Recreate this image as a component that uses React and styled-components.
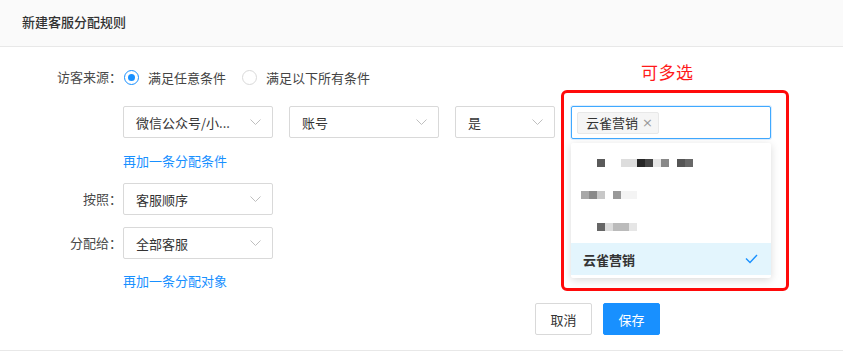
import styled, { createGlobalStyle } from "styled-components"

const GlobalStyle = createGlobalStyle`
  * { box-sizing: border-box; }
  body {
    margin: 0;
    background: #fff;
    font-family: "Noto Sans CJK SC", "Noto Sans", sans-serif;
    font-size: 13px;
    color: #444;
  }
`

// blurred option labels, drawn as mosaic blocks: [gap before, width, colour]
const sourceOptions = [
  { id: 1, blocks: [[26, 8, "#5a5a5a"], [16, 16, "#dddddd"], [0, 8, "#262626"], [0, 8, "#454545"], [0, 8, "#e6e6e6"], [0, 8, "#888888"], [8, 8, "#555555"], [0, 8, "#686868"]] },
  { id: 2, blocks: [[10, 8, "#a8a8a8"], [0, 8, "#8a8a8a"], [0, 8, "#c8c8c8"], [8, 8, "#999999"], [0, 16, "#f4f4f4"]] },
  { id: 3, blocks: [[26, 8, "#666666"], [0, 8, "#dcdcdc"], [0, 16, "#bbbbbb"], [0, 8, "#e6e6e6"]] },
]

function Chevron() {
  return (
    <svg width="11" height="6" viewBox="0 0 11 6">
      <polyline points="0.5,0.5 5.5,5.5 10.5,0.5" fill="none" stroke="#bfbfbf" strokeWidth="1" />
    </svg>
  )
}

function Select({ width, children }) {
  return (
    <SelectBox $width={width}>
      <span>{children}</span>
      <Chevron />
    </SelectBox>
  )
}

export default function App() {
  return (
    <Page>
      <GlobalStyle />
      <Header>新建客服分配规则</Header>

      <Body>
        <Row $top={15}>
          <Label>访客来源：</Label>
          <RadioGroup>
            <RadioItem>
              <Radio $checked />
              满足任意条件
            </RadioItem>
            <RadioItem>
              <Radio />
              满足以下所有条件
            </RadioItem>
          </RadioGroup>
        </Row>

        <Row $top={14}>
          <Label />
          <Conditions>
            <Select width={150}>微信公众号/小...</Select>
            <Select width={150}>账号</Select>
            <Select width={100}>是</Select>
            <MultiWrap>
              <MultiSelect>
                <Tag>
                  云雀营销
                  <TagClose>×</TagClose>
                </Tag>
              </MultiSelect>

              <Dropdown>
                {sourceOptions.map((opt) => (
                  <MosaicOption key={opt.id}>
                    {opt.blocks.map(([gap, w, c], i) => (
                      <Pixel key={i} $gap={gap} $w={w} $c={c} />
                    ))}
                  </MosaicOption>
                ))}
                <Option $selected>
                  云雀营销
                  <svg width="13" height="10" viewBox="0 0 13 10">
                    <polyline points="1,4.5 5,8.5 12,1" fill="none" stroke="#1890ff" strokeWidth="1.4" />
                  </svg>
                </Option>
              </Dropdown>

              <Highlight />
              <Note>可多选</Note>
            </MultiWrap>
          </Conditions>
        </Row>

        <Row $top={14}>
          <Label />
          <Link>再加一条分配条件</Link>
        </Row>

        <Row $top={14}>
          <Label>按照：</Label>
          <Select width={150}>客服顺序</Select>
        </Row>

        <Row $top={12}>
          <Label>分配给：</Label>
          <Select width={150}>全部客服</Select>
        </Row>

        <Row $top={14}>
          <Label />
          <Link>再加一条分配对象</Link>
        </Row>

        <Footer>
          <Button>取消</Button>
          <Button $primary>保存</Button>
        </Footer>
      </Body>
    </Page>
  )
}

const Page = styled.div`
  width: 843px;
  height: 351px;
  display: flex;
  flex-direction: column;
`
const Header = styled.header`
  height: 47px;
  background: #fafafa;
  border-bottom: 1px solid #e8e8e8;
  padding: 0 22px;
  display: flex;
  align-items: center;
  padding-bottom: 4px;
  font-size: 13px;
  font-weight: 500;
  color: #333;
`
const Body = styled.main`
  flex: 1;
  border-bottom: 1px solid #e8e8e8;
  display: flex;
  flex-direction: column;
`
const Row = styled.div`
  display: flex;
  align-items: center;
  margin-top: ${(p) => p.$top}px;
  min-height: 16px;
`
const Label = styled.label`
  width: 122px;
  flex-shrink: 0;
  text-align: right;
  color: #4a4a4a;
  line-height: 30px;
  margin-right: 1px;
`
const RadioGroup = styled.div`
  display: flex;
  gap: 16px;
  margin-left: 1px;
`
const RadioItem = styled.span`
  display: flex;
  align-items: center;
  gap: 9px;
  color: #444;
`
const Radio = styled.span`
  width: 15px;
  height: 15px;
  border-radius: 50%;
  border: 1px solid ${(p) => (p.$checked ? "#1890ff" : "#d9d9d9")};
  display: flex;
  align-items: center;
  justify-content: center;

  &::after {
    content: "";
    width: 7px;
    height: 7px;
    border-radius: 50%;
    background: #1890ff;
    display: ${(p) => (p.$checked ? "block" : "none")};
  }
`
const Conditions = styled.div`
  display: flex;
  gap: 16px;
`
const SelectBox = styled.div`
  width: ${(p) => p.$width}px;
  height: 32px;
  border: 1px solid #d9d9d9;
  border-radius: 2px;
  padding: 0 11px 0 12px;
  display: flex;
  align-items: center;
  justify-content: space-between;
  color: #333;
  background: #fff;
`
const MultiWrap = styled.div`
  position: relative;
  width: 200px;
`
const MultiSelect = styled.div`
  height: 33px;
  border: 1px solid #40a9ff;
  border-radius: 2px;
  box-shadow: 0 0 0 1px rgba(24, 144, 255, 0.15);
  padding: 0 5px;
  display: flex;
  align-items: center;
  background: #fff;
`
const Tag = styled.span`
  height: 22px;
  padding: 0 5px 0 8px;
  background: #f5f5f5;
  border: 1px solid #e8e8e8;
  border-radius: 2px;
  display: flex;
  align-items: center;
  gap: 4px;
  color: #333;
`
const TagClose = styled.span`
  color: #999;
  font-size: 13px;
  font-family: "DejaVu Sans", sans-serif;
`
const Dropdown = styled.div`
  position: absolute;
  top: 37px;
  left: 0;
  width: 200px;
  padding: 4px 0 3px;
  background: #fff;
  border-radius: 2px;
  box-shadow: 0 2px 8px rgba(0, 0, 0, 0.15);
  z-index: 2;
`
const Option = styled.div`
  height: 32px;
  padding: 0 13px 0 12px;
  display: flex;
  align-items: center;
  justify-content: ${(p) => (p.$selected ? "space-between" : "flex-start")};
  background: ${(p) => (p.$selected ? "#e3f5fd" : "#fff")};
  font-weight: ${(p) => (p.$selected ? 600 : 400)};
  color: #333;
`
const MosaicOption = styled(Option)`
  padding: 0;
`
const Pixel = styled.span`
  width: ${(p) => p.$w}px;
  height: 8px;
  margin-left: ${(p) => p.$gap}px;
  background: ${(p) => p.$c};
`
const Highlight = styled.div`
  position: absolute;
  left: -10px;
  top: -16px;
  width: 228px;
  height: 201px;
  border: 3px solid #ff0a0a;
  border-radius: 6px;
  z-index: 3;
  pointer-events: none;
`
const Note = styled.div`
  position: absolute;
  left: 70px;
  top: -47px;
  font-size: 17px;
  color: #ff1a1a;
  letter-spacing: 0.5px;
`
const Link = styled.a`
  color: #1890ff;
  line-height: 16px;
  cursor: pointer;
`
const Footer = styled.div`
  display: flex;
  gap: 11px;
  margin: 14px 0 0 535px;
`
const Button = styled.button`
  width: 57px;
  height: 32px;
  border-radius: 2px;
  font-family: inherit;
  font-size: 13px;
  border: 1px solid ${(p) => (p.$primary ? "#1890ff" : "#d9d9d9")};
  background: ${(p) => (p.$primary ? "#1890ff" : "#fff")};
  color: ${(p) => (p.$primary ? "#fff" : "#333")};
`
